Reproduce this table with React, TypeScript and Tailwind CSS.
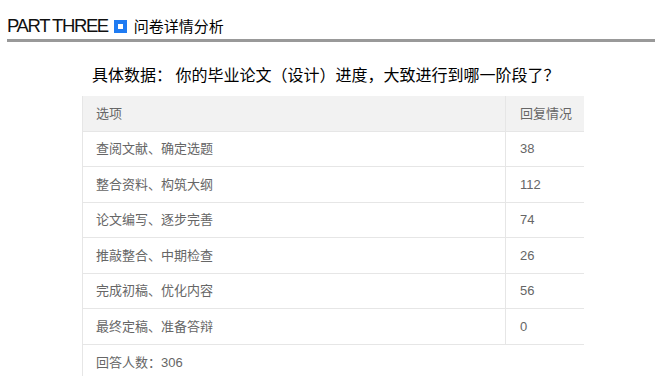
import React from 'react';

interface Row {
  option: string;
  count: number;
}

const rows: Row[] = [
  { option: '查阅文献、确定选题', count: 38 },
  { option: '整合资料、构筑大纲', count: 112 },
  { option: '论文编写、逐步完善', count: 74 },
  { option: '推敲整合、中期检查', count: 26 },
  { option: '完成初稿、优化内容', count: 56 },
  { option: '最终定稿、准备答辩', count: 0 },
];

const cjk = { fontFamily: '"Liberation Sans", "Noto Sans CJK SC", sans-serif' };

const App: React.FC = () => {
  const total = rows.reduce((sum, r) => sum + r.count, 0);

  return (
    <div className="w-[655px] h-[376px] overflow-hidden bg-white pl-[7px] pt-[13px]" style={cjk}>
      {/* Section heading */}
      <div className="flex items-center h-[29px] border-b-[3px] border-[#999999]">
        <span className="text-[18.5px] leading-[26px] tracking-[-1.4px] text-[#111]">PART THREE</span>
        <span className="ml-[6px] w-[13px] h-[13px] bg-[#1f7bf2] flex items-center justify-center">
          <span className="w-[5px] h-[5px] bg-white" />
        </span>
        <span className="ml-[7px] text-[15px] leading-[26px] text-black" style={{ fontFamily: '"Noto Sans CJK SC", sans-serif' }}>
          问卷详情分析
        </span>
      </div>

      {/* Question */}
      <div className="ml-[85px] mt-[20px] text-[16px] leading-[24px] text-black" style={{ fontFamily: '"Noto Sans CJK SC", sans-serif' }}>
        具体数据： 你的毕业论文（设计）进度，大致进行到哪一阶段了？
      </div>

      {/* Table */}
      <div className="ml-[75px] mt-[10px] w-[502px] border-l border-[#e6e6e6] text-[13px] text-[#666666]">
        <div className="flex h-[35.5px] bg-[#f2f2f2] border-b border-[#e6e6e6]">
          <div className="w-[423px] pl-[13px] flex items-center border-r border-[#e6e6e6]">选项</div>
          <div className="flex-1 pl-[14px] flex items-center">回复情况</div>
        </div>
        {rows.map((row) => (
          <div key={row.option} className="flex h-[35.5px] border-b border-[#e6e6e6]">
            <div className="w-[423px] pl-[13px] flex items-center border-r border-[#e6e6e6]">{row.option}</div>
            <div className="flex-1 pl-[14px] flex items-center">{row.count}</div>
          </div>
        ))}
        <div className="flex h-[35.5px] pl-[13px] items-center">回答人数：{total}</div>
      </div>
    </div>
  );
};

export default App;
